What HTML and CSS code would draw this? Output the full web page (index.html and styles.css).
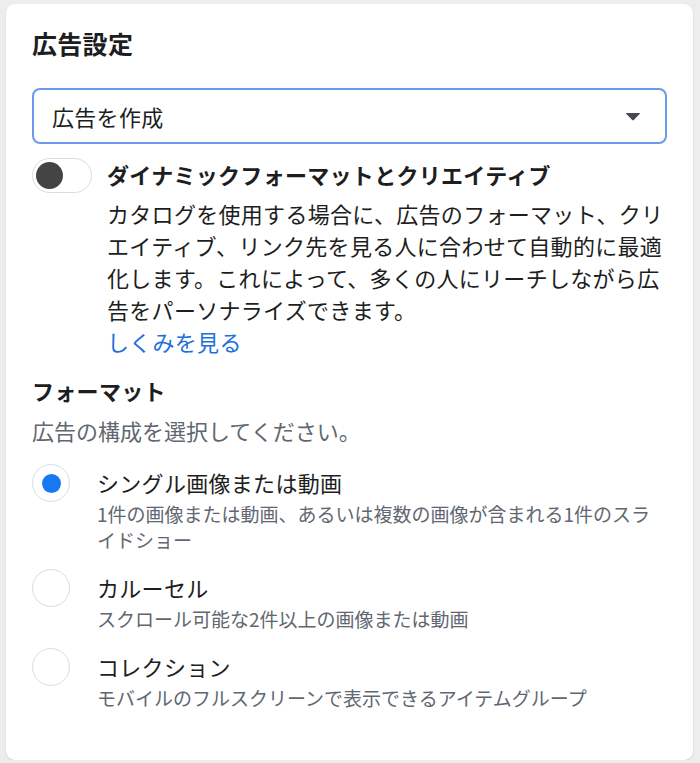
FILE: index.html
```html
<!DOCTYPE html>
<html lang="ja">

<head>
    <meta charset="UTF-8">
    <title>広告設定</title>
    <link rel="stylesheet" href="styles.css">
</head>

<body>
    <main class="card">
        <h1 class="title">広告設定</h1>

        <div class="select">
            <span>広告を作成</span>
            <svg class="caret" width="16" height="9" viewBox="0 0 16 9">
                <path d="M1.5 1 L14.5 1 Q15.5 1 14.8 1.8 L8.8 8 Q8 8.8 7.2 8 L1.2 1.8 Q0.5 1 1.5 1 Z" fill="#444950"/>
            </svg>
        </div>

        <section class="dynamic">
            <div class="toggle"><span class="knob"></span></div>
            <div class="dynamic-text">
                <h2>ダイナミックフォーマットとクリエイティブ</h2>
                <p>カタログを使用する場合に、広告のフォーマット、クリエイティブ、リンク先を見る人に合わせて自動的に最適化します。これによって、多くの人にリーチしながら広告をパーソナライズできます。</p>
                <a href="#">しくみを見る</a>
            </div>
        </section>

        <h2 class="format-title">フォーマット</h2>
        <p class="format-hint">広告の構成を選択してください。</p>

        <ul class="options">
            <li class="option">
                <span class="radio checked"></span>
                <div>
                    <div class="label">シングル画像または動画</div>
                    <div class="sub">1件の画像または動画、あるいは複数の画像が含まれる1件のスライドショー</div>
                </div>
            </li>
            <li class="option">
                <span class="radio"></span>
                <div>
                    <div class="label">カルーセル</div>
                    <div class="sub">スクロール可能な2件以上の画像または動画</div>
                </div>
            </li>
            <li class="option">
                <span class="radio"></span>
                <div>
                    <div class="label">コレクション</div>
                    <div class="sub">モバイルのフルスクリーンで表示できるアイテムグループ</div>
                </div>
            </li>
        </ul>
    </main>
</body></html>
```

FILE: styles.css
```css
* {
    box-sizing: border-box;
    padding: 0;
    margin: 0;
}

body {
    background: #ededed;
    font-family: "Noto Sans CJK JP", "Noto Sans", sans-serif;
    color: #1c1e21;
}

.card {
    margin: 4px 7px 0 6px;
    height: 756px;
    background: #fff;
    border-radius: 9px;
    box-shadow: 0 1px 2px rgba(0, 0, 0, 0.12);
    padding: 23px 26px 0 26px;
}

.title {
    font-size: 25px;
    line-height: 32px;
    font-weight: 700;
    letter-spacing: 0.3px;
}

.select {
    margin-top: 29px;
    height: 56px;
    border: 2px solid #6b9be8;
    border-radius: 8px;
    display: flex;
    align-items: center;
    justify-content: space-between;
    padding: 0 24px 0 18px;
    font-size: 22px;
    letter-spacing: 0.3px;
}

.caret {
    display: block;
}

.dynamic {
    margin-top: 14px;
    display: flex;
    gap: 15px;
}

.toggle {
    flex: none;
    width: 60px;
    height: 35px;
    border: 1.5px solid #dcdcdc;
    border-radius: 18px;
    padding: 3px 0 0 3px;
}

.knob {
    display: block;
    width: 27px;
    height: 27px;
    border-radius: 50%;
    background: #444;
}

.dynamic-text {
    width: 562px;
    font-size: 22px;
    line-height: 32px;
    letter-spacing: 0.3px;
}

.dynamic-text h2 {
    font-size: 22px;
    font-weight: 700;
}

.dynamic-text p {
    margin-top: 7px;
}

.dynamic-text a {
    color: #216fdb;
    text-decoration: none;
}

.format-title {
    margin-top: 17px;
    font-size: 22px;
    line-height: 32px;
    font-weight: 700;
    letter-spacing: 0.3px;
}

.format-hint {
    margin-top: 8px;
    font-size: 22px;
    line-height: 32px;
    color: #606770;
}

.options {
    list-style: none;
    margin-top: 20px;
    display: flex;
    flex-direction: column;
    gap: 18px;
}

.option {
    display: flex;
    gap: 27px;
}

.radio {
    flex: none;
    width: 38px;
    height: 38px;
    margin-top: -2px;
    border: 1.5px solid #dadde1;
    border-radius: 50%;
    display: flex;
    align-items: center;
    justify-content: center;
}

.radio.checked::after {
    content: "";
    width: 19px;
    height: 19px;
    border-radius: 50%;
    background: #1877f2;
}

.label {
    font-size: 22px;
    line-height: 32px;
    letter-spacing: 0.3px;
}

.sub {
    margin-top: 3px;
    width: 570px;
    font-size: 19px;
    line-height: 26px;
    color: #606770;
}
```
